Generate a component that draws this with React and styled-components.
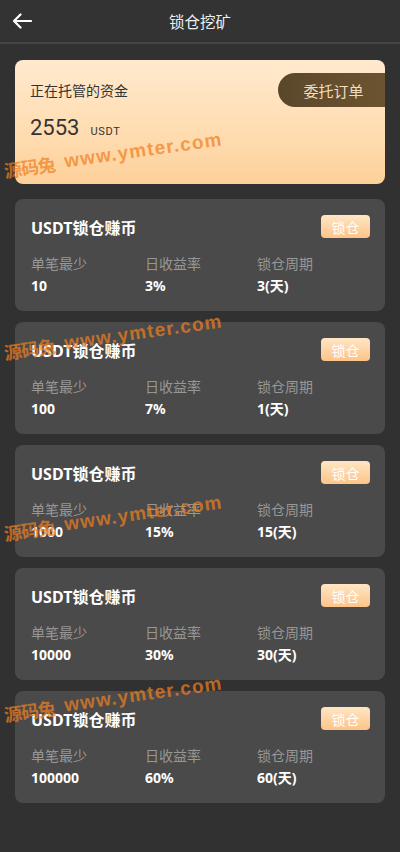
import React from "react";
import styled, { createGlobalStyle } from "styled-components";

const plans = [
  { min: "10", rate: "3%", days: "3" },
  { min: "100", rate: "7%", days: "1" },
  { min: "1000", rate: "15%", days: "15" },
  { min: "10000", rate: "30%", days: "30" },
  { min: "100000", rate: "60%", days: "60" },
];

const marks = [170, 352, 533, 714];

export default function App() {
  return (
    <Page>
      <GlobalStyle />
      <Header>
        <BackButton aria-label="back">
          <svg width="20" height="16" viewBox="0 0 20 16" fill="none">
            <path
              d="M19 8H2M8.5 1.5L2 8l6.5 6.5"
              stroke="#fff"
              strokeWidth="2.2"
              strokeLinecap="round"
              strokeLinejoin="round"
            />
          </svg>
        </BackButton>
        <Title>锁仓挖矿</Title>
      </Header>

      <Content>
        <FundCard>
          <FundTop>
            <FundLabel>正在托管的资金</FundLabel>
            <OrderButton>委托订单</OrderButton>
          </FundTop>
          <Amount>
            <AmountValue>2553</AmountValue>
            <AmountUnit>USDT</AmountUnit>
          </Amount>
        </FundCard>

        {plans.map((p, i) => (
          <PlanCard key={i}>
            <PlanHead>
              <PlanTitle>USDT锁仓赚币</PlanTitle>
              <LockButton>锁仓</LockButton>
            </PlanHead>
            <PlanGrid>
              <Label>单笔最少</Label>
              <Label>日收益率</Label>
              <Label>锁仓周期</Label>
              <Value>{p.min}</Value>
              <Value>{p.rate}</Value>
              <Value>{p.days}(天)</Value>
            </PlanGrid>
          </PlanCard>
        ))}
      </Content>

      <Watermarks>
        {marks.map((y) => (
          <Mark key={y} style={{ top: y }}>
            <MarkCn>源码兔</MarkCn>
            <MarkUrl>www.ymter.com</MarkUrl>
          </Mark>
        ))}
      </Watermarks>
    </Page>
  );
}

const GlobalStyle = createGlobalStyle`
  * { box-sizing: border-box; }
  html, body {
    margin: 0;
    padding: 0;
    background: #313131;
  }
  body {
    font-family: "Noto Sans", "Noto Sans CJK SC", sans-serif;
  }
`;

const Page = styled.div`
  position: relative;
  width: 400px;
  min-height: 852px;
  background: #313131;
  overflow: hidden;
`;

const Header = styled.header`
  height: 44px;
  background: #333333;
  border-bottom: 2px solid #454545;
  display: flex;
  align-items: center;
  justify-content: center;
  position: relative;
`;

const BackButton = styled.button`
  position: absolute;
  left: 12px;
  top: 13px;
  padding: 0;
  border: 0;
  background: none;
  display: flex;
`;

const Title = styled.h1`
  margin: 0;
  font-size: 15.5px;
  font-weight: 400;
  color: #eeeeee;
  font-family: "Noto Sans CJK SC", sans-serif;
`;

const Content = styled.main`
  padding: 16px 15px 0;
  display: flex;
  flex-direction: column;
  gap: 11px;
`;

const FundCard = styled.section`
  height: 124px;
  border-radius: 8px;
  overflow: hidden;
  background: linear-gradient(180deg, #ffeacf 0%, #ffdcb0 60%, #fdd09a 100%);
  padding-top: 13px;
  margin-bottom: 4px;
`;

const FundTop = styled.div`
  display: flex;
  align-items: center;
  justify-content: space-between;
  height: 34px;
  padding-left: 15px;
`;

const FundLabel = styled.span`
  font-size: 14px;
  color: #333;
  font-family: "Noto Sans CJK SC", sans-serif;
`;

const OrderButton = styled.button`
  width: 107px;
  height: 34px;
  border: 0;
  border-radius: 17px 0 0 17px;
  background: linear-gradient(90deg, #5a472b 0%, #6c5430 100%);
  color: #f3ddbf;
  font-size: 15px;
  font-family: "Noto Sans CJK SC", sans-serif;
  padding: 0 0 0 4px;
`;

const Amount = styled.div`
  display: flex;
  align-items: baseline;
  gap: 11px;
  padding: 5px 0 0 15px;
  color: #333;
`;

const AmountValue = styled.span`
  font-family: Roboto, sans-serif;
  font-size: 22px;
  font-weight: 400;
  line-height: 32px;
`;

const AmountUnit = styled.span`
  font-family: Roboto, sans-serif;
  font-size: 11px;
  letter-spacing: 0.7px;
`;

const PlanCard = styled.section`
  height: 112px;
  border-radius: 8px;
  background: #4a4a4a;
  padding: 16px 15px 0 16px;
`;

const PlanHead = styled.div`
  display: flex;
  align-items: center;
  justify-content: space-between;
  height: 23px;
`;

const PlanTitle = styled.h2`
  margin: 0;
  font-size: 16px;
  font-weight: 700;
  color: #fff;
`;

const LockButton = styled.button`
  width: 49px;
  height: 23px;
  border: 0;
  border-radius: 4px;
  background: linear-gradient(180deg, #ffe6c4 0%, #fcc489 100%);
  color: #fff;
  font-size: 14px;
  font-family: "Noto Sans CJK SC", sans-serif;
  padding: 0;
`;

const PlanGrid = styled.div`
  display: grid;
  grid-template-columns: 114px 112px 1fr;
  row-gap: 3px;
  margin-top: 15px;
`;

const Label = styled.span`
  font-size: 14px;
  line-height: 20px;
  color: #979797;
  font-family: "Noto Sans CJK SC", sans-serif;
`;

const Value = styled.span`
  font-size: 14px;
  line-height: 20px;
  font-weight: 700;
  color: #fff;
`;

const Watermarks = styled.div`
  position: absolute;
  inset: 0;
  pointer-events: none;
`;

const Mark = styled.div`
  position: absolute;
  left: 4px;
  display: flex;
  align-items: center;
  gap: 10px;
  height: 24px;
  margin-top: -12px;
  transform: rotate(-8deg);
  transform-origin: 0 50%;
  color: rgba(240, 128, 30, 0.72);
  white-space: nowrap;
`;

const MarkCn = styled.span`
  font-family: "Noto Sans CJK SC", sans-serif;
  font-weight: 700;
  font-size: 18px;
  letter-spacing: -1px;
`;

const MarkUrl = styled.span`
  font-family: "Liberation Sans", sans-serif;
  font-weight: 700;
  font-size: 19px;
  letter-spacing: 1.2px;
`;
